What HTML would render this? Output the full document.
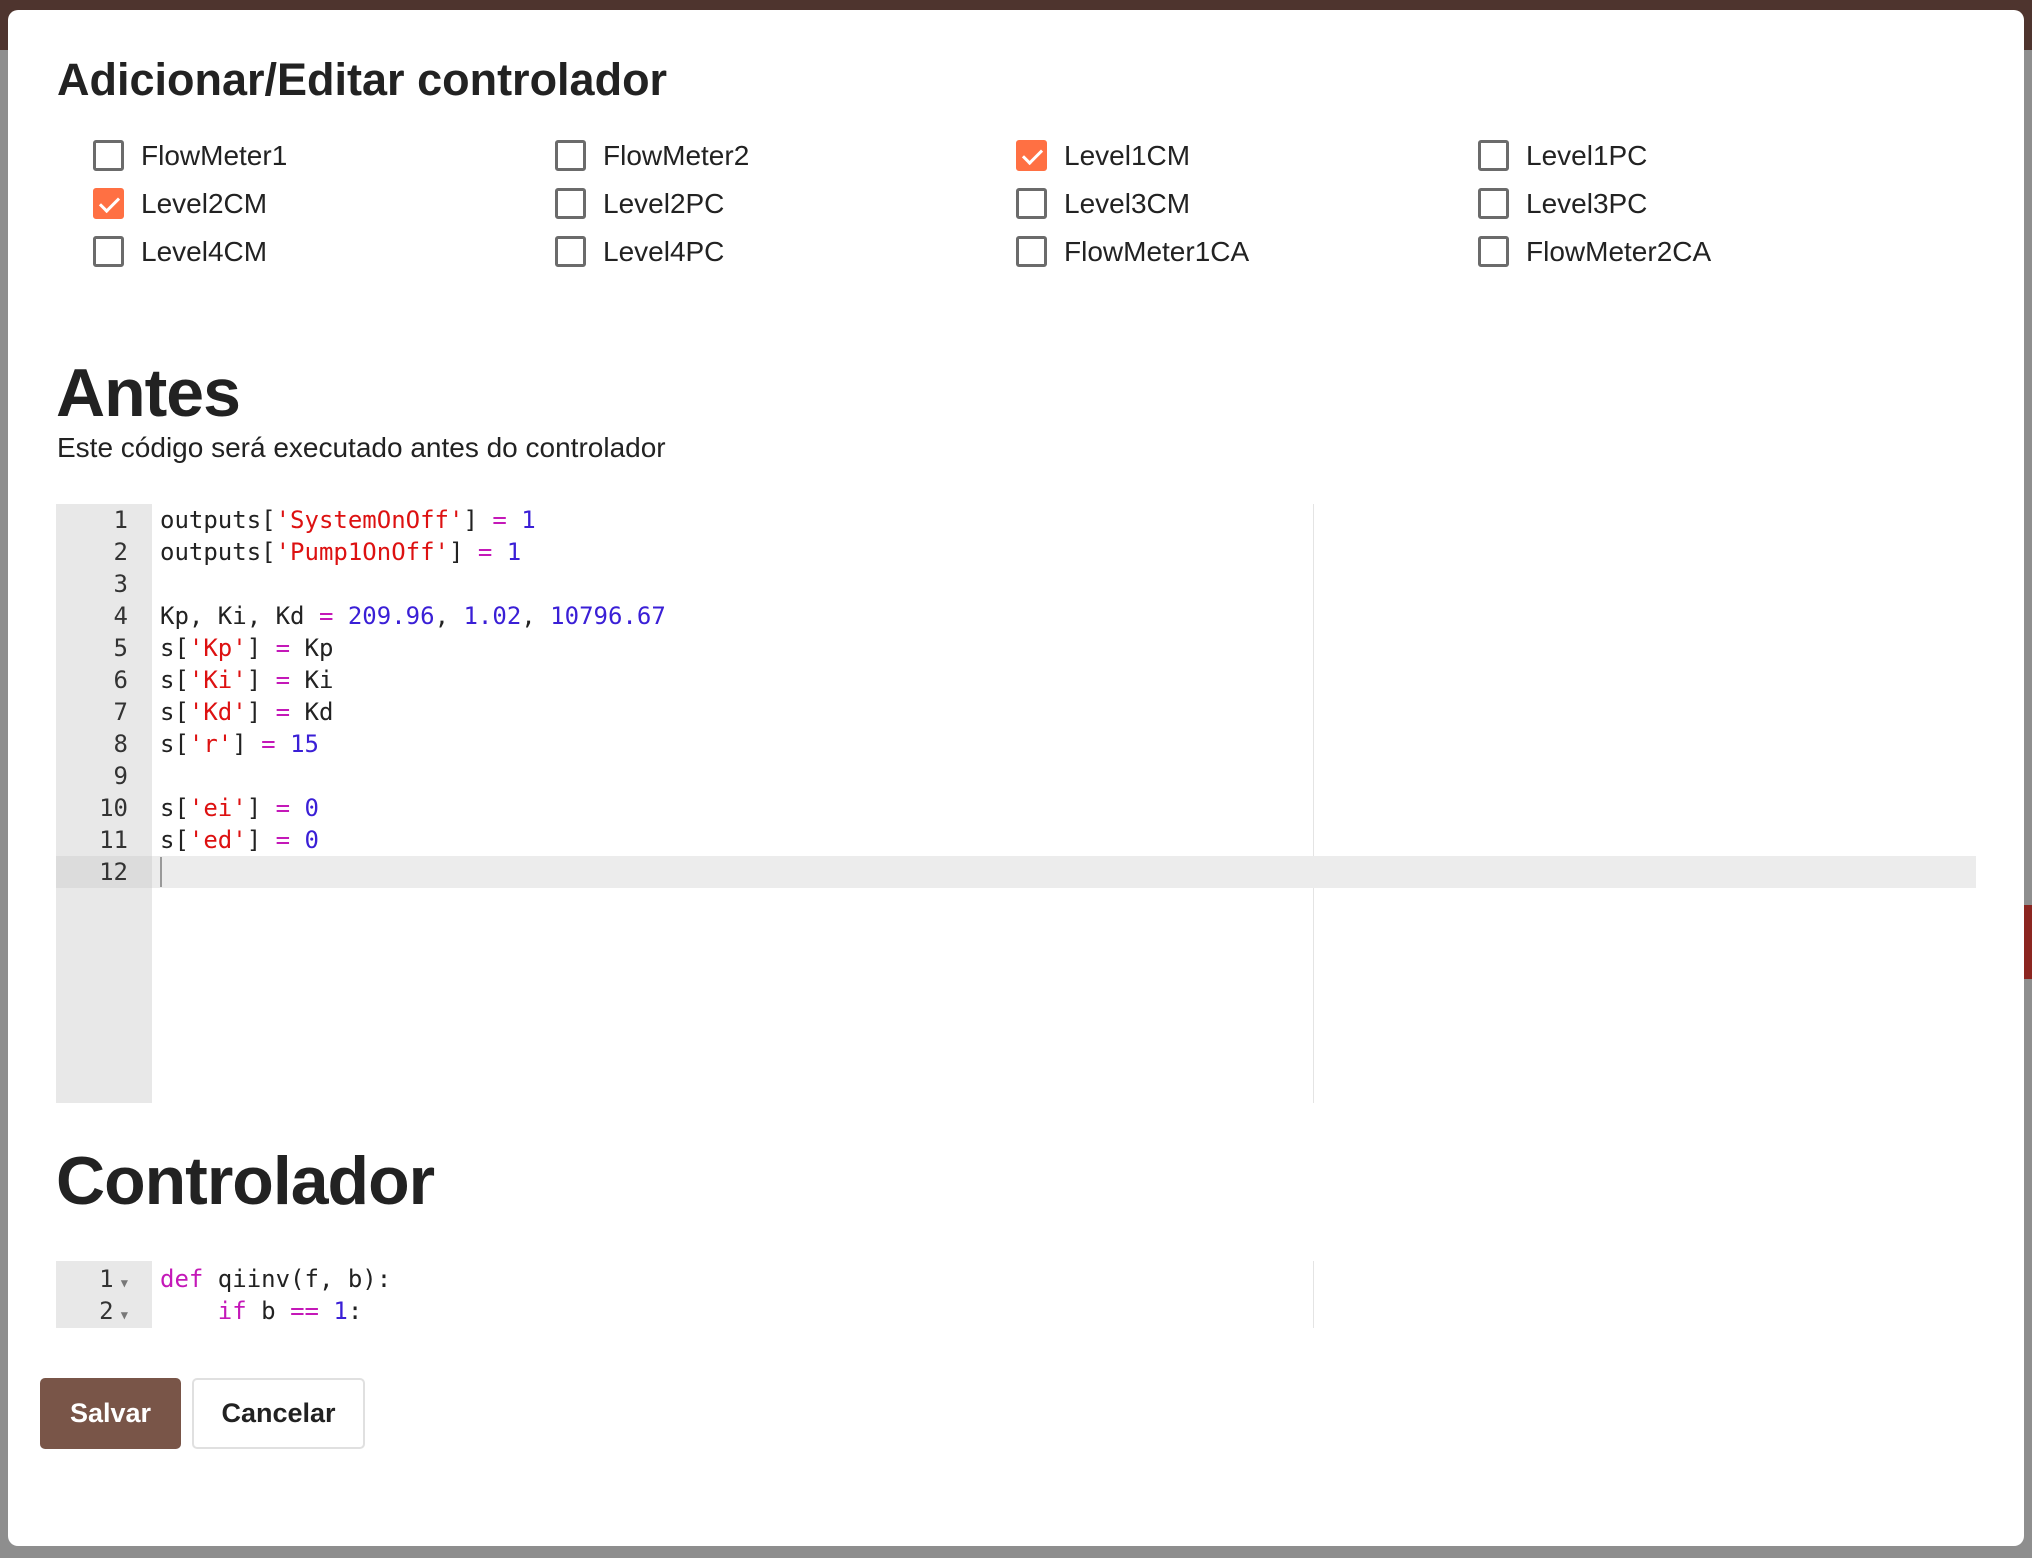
<!DOCTYPE html>
<html><head><meta charset="utf-8"><style>
*{box-sizing:border-box;margin:0;padding:0}
body{width:2032px;height:1558px;background:#8e8e8e;position:relative;overflow:hidden;font-family:"Liberation Sans",sans-serif;color:#222}
.topbar{position:absolute;left:0;top:0;width:2032px;height:50px;background:#4e342e}
.red{position:absolute;left:2024px;top:905px;width:8px;height:74px;background:#8b2520}
.modal{position:absolute;left:8px;top:10px;width:2016px;height:1536px;background:#fff;border-radius:10px}
h1{position:absolute;left:57px;top:54px;font-size:45px;font-weight:700;letter-spacing:0}
.cb{position:absolute;font-size:28px;color:#222;height:32px;line-height:32px;padding-left:48px}
.cb i{position:absolute;left:0;top:0;width:31px;height:31px;border:3px solid #6b6b6b;border-radius:3px}
.cb i.on{background:#ff7043;border-color:#ff7043}
.cb i.on:after{content:"";position:absolute;left:8px;top:2px;width:8px;height:16px;border:solid #fff;border-width:0 3px 3px 0;transform:rotate(45deg)}
h2{position:absolute;left:56px;font-size:68px;font-weight:700;letter-spacing:-1px}
.sub{position:absolute;left:57px;top:432px;font-size:28px}
.ed{position:absolute;left:56px;width:1920px;background:#fff;font-family:"DejaVu Sans Mono","Liberation Mono",monospace;font-size:24px}
.gut{position:absolute;left:0;top:0;width:96px;height:100%;background:#e8e8e8}
.pm{position:absolute;left:1257px;top:0;width:1px;height:100%;background:#e4e4e4}
.ln{position:absolute;left:0;width:1920px;height:32px;line-height:32px;white-space:pre}
.ln b{font-weight:normal;position:absolute;left:0;width:72px;text-align:right;color:#333}
.ln span.c{position:absolute;left:104px}
.s{color:#d11}.n{color:#3a1fd6}.o{color:#c418b8}.k{color:#c418b8}
.act{background:#ececec}.act b{background:#dcdcdc;width:96px;padding-right:24px}
.btn{position:absolute;top:1378px;height:71px;border-radius:5px;font-size:27px;font-weight:700;line-height:71px;text-align:center}
</style></head><body>
<div class="topbar"></div><div class="red"></div>
<div class="modal"></div>
<h1>Adicionar/Editar controlador</h1>
<div class="cb" style="left:93px;top:140px"><i></i>FlowMeter1</div>
<div class="cb" style="left:555px;top:140px"><i></i>FlowMeter2</div>
<div class="cb" style="left:1016px;top:140px"><i class="on"></i>Level1CM</div>
<div class="cb" style="left:1478px;top:140px"><i></i>Level1PC</div>
<div class="cb" style="left:93px;top:188px"><i class="on"></i>Level2CM</div>
<div class="cb" style="left:555px;top:188px"><i></i>Level2PC</div>
<div class="cb" style="left:1016px;top:188px"><i></i>Level3CM</div>
<div class="cb" style="left:1478px;top:188px"><i></i>Level3PC</div>
<div class="cb" style="left:93px;top:236px"><i></i>Level4CM</div>
<div class="cb" style="left:555px;top:236px"><i></i>Level4PC</div>
<div class="cb" style="left:1016px;top:236px"><i></i>FlowMeter1CA</div>
<div class="cb" style="left:1478px;top:236px"><i></i>FlowMeter2CA</div>
<h2 style="top:354px">Antes</h2>
<div class="sub">Este código será executado antes do controlador</div>
<div class="ed" style="top:504px;height:599px">
<div class="gut"></div><div class="pm"></div>
<div class="ln" style="top:0"><b>1</b><span class="c">outputs[<span class="s">'SystemOnOff'</span>] <span class="o">=</span> <span class="n">1</span></span></div>
<div class="ln" style="top:32px"><b>2</b><span class="c">outputs[<span class="s">'Pump1OnOff'</span>] <span class="o">=</span> <span class="n">1</span></span></div>
<div class="ln" style="top:64px"><b>3</b></div>
<div class="ln" style="top:96px"><b>4</b><span class="c">Kp, Ki, Kd <span class="o">=</span> <span class="n">209.96</span>, <span class="n">1.02</span>, <span class="n">10796.67</span></span></div>
<div class="ln" style="top:128px"><b>5</b><span class="c">s[<span class="s">'Kp'</span>] <span class="o">=</span> Kp</span></div>
<div class="ln" style="top:160px"><b>6</b><span class="c">s[<span class="s">'Ki'</span>] <span class="o">=</span> Ki</span></div>
<div class="ln" style="top:192px"><b>7</b><span class="c">s[<span class="s">'Kd'</span>] <span class="o">=</span> Kd</span></div>
<div class="ln" style="top:224px"><b>8</b><span class="c">s[<span class="s">'r'</span>] <span class="o">=</span> <span class="n">15</span></span></div>
<div class="ln" style="top:256px"><b>9</b></div>
<div class="ln" style="top:288px"><b>10</b><span class="c">s[<span class="s">'ei'</span>] <span class="o">=</span> <span class="n">0</span></span></div>
<div class="ln" style="top:320px"><b>11</b><span class="c">s[<span class="s">'ed'</span>] <span class="o">=</span> <span class="n">0</span></span></div>
<div class="ln act" style="top:352px"><b>12</b><span class="c" style="border-left:2px solid #999;height:30px;top:1px"></span></div>
</div>
<h2 style="top:1142px">Controlador</h2>
<div class="ed" style="top:1261px;height:67px">
<div class="gut"></div><div class="pm"></div>
<div class="ln" style="top:2px"><b>1<span style="font-size:12px;color:#777"> ▼</span></b><span class="c"><span class="k">def</span> qiinv(f, b):</span></div>
<div class="ln" style="top:34px"><b>2<span style="font-size:12px;color:#777"> ▼</span></b><span class="c">    <span class="k">if</span> b <span class="o">==</span> <span class="n">1</span>:</span></div>
</div>
<div class="btn" style="left:40px;width:141px;background:#795548;color:#fff">Salvar</div>
<div class="btn" style="left:192px;width:173px;background:#fff;border:2px solid #e0e0e0;color:#222;line-height:67px">Cancelar</div>
</body></html>
